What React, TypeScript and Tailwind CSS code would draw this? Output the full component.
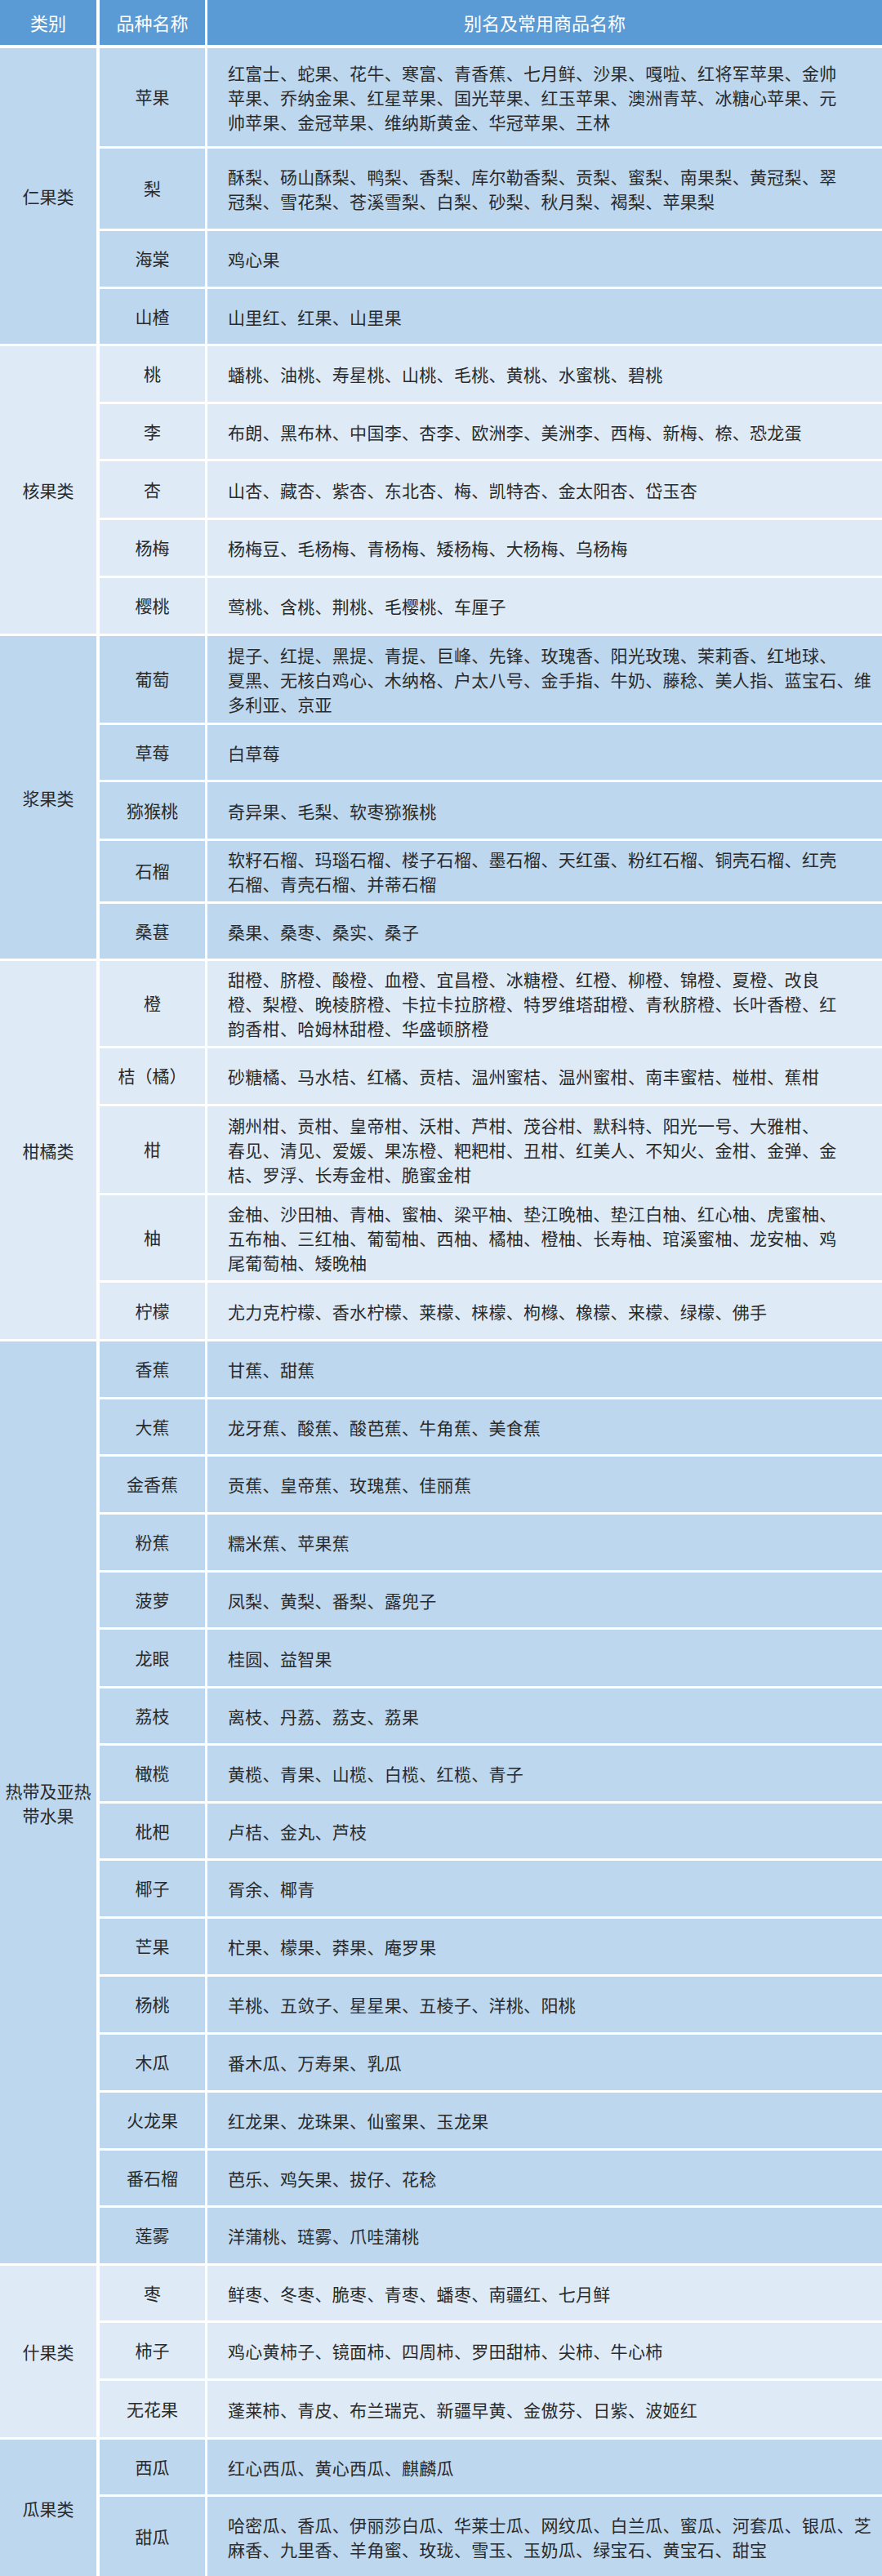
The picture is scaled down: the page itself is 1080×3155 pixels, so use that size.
import React from "react"

type Row = {
  name: string
  h: string
  lines: string[]
}

type Group = {
  name: string[]
  dark: boolean
  rows: Row[]
}

const groups: Group[] = [
  {
    name: ["仁果类"],
    dark: true,
    rows: [
      {
        name: "苹果",
        h: "h-[120px]",
        lines: [
          "红富士、蛇果、花牛、寒富、青香蕉、七月鲜、沙果、嘎啦、红将军苹果、金帅",
          "苹果、乔纳金果、红星苹果、国光苹果、红玉苹果、澳洲青苹、冰糖心苹果、元",
          "帅苹果、金冠苹果、维纳斯黄金、华冠苹果、王林",
        ],
      },
      {
        name: "梨",
        h: "h-[98px]",
        lines: [
          "酥梨、砀山酥梨、鸭梨、香梨、库尔勒香梨、贡梨、蜜梨、南果梨、黄冠梨、翠",
          "冠梨、雪花梨、苍溪雪梨、白梨、砂梨、秋月梨、褐梨、苹果梨",
        ],
      },
      { name: "海棠", h: "h-[68px]", lines: ["鸡心果"] },
      { name: "山楂", h: "h-[67px]", lines: ["山里红、红果、山里果"] },
    ],
  },
  {
    name: ["核果类"],
    dark: false,
    rows: [
      { name: "桃", h: "h-[68px]", lines: ["蟠桃、油桃、寿星桃、山桃、毛桃、黄桃、水蜜桃、碧桃"] },
      { name: "李", h: "h-[67px]", lines: ["布朗、黑布林、中国李、杏李、欧洲李、美洲李、西梅、新梅、㮈、恐龙蛋"] },
      { name: "杏", h: "h-[69px]", lines: ["山杏、藏杏、紫杏、东北杏、梅、凯特杏、金太阳杏、岱玉杏"] },
      { name: "杨梅", h: "h-[68px]", lines: ["杨梅豆、毛杨梅、青杨梅、矮杨梅、大杨梅、乌杨梅"] },
      { name: "樱桃", h: "h-[68px]", lines: ["莺桃、含桃、荆桃、毛樱桃、车厘子"] },
    ],
  },
  {
    name: ["浆果类"],
    dark: true,
    rows: [
      {
        name: "葡萄",
        h: "h-[106px]",
        lines: [
          "提子、红提、黑提、青提、巨峰、先锋、玫瑰香、阳光玫瑰、茉莉香、红地球、",
          "夏黑、无核白鸡心、木纳格、户太八号、金手指、牛奶、藤稔、美人指、蓝宝石、维",
          "多利亚、京亚",
        ],
      },
      { name: "草莓", h: "h-[67px]", lines: ["白草莓"] },
      { name: "猕猴桃", h: "h-[69px]", lines: ["奇异果、毛梨、软枣猕猴桃"] },
      {
        name: "石榴",
        h: "h-[74px]",
        lines: [
          "软籽石榴、玛瑙石榴、楼子石榴、墨石榴、天红蛋、粉红石榴、铜壳石榴、红壳",
          "石榴、青壳石榴、并蒂石榴",
        ],
      },
      { name: "桑葚", h: "h-[67px]", lines: ["桑果、桑枣、桑实、桑子"] },
    ],
  },
  {
    name: ["柑橘类"],
    dark: false,
    rows: [
      {
        name: "橙",
        h: "h-[104px]",
        lines: [
          "甜橙、脐橙、酸橙、血橙、宜昌橙、冰糖橙、红橙、柳橙、锦橙、夏橙、改良",
          "橙、梨橙、晚棱脐橙、卡拉卡拉脐橙、特罗维塔甜橙、青秋脐橙、长叶香橙、红",
          "韵香柑、哈姆林甜橙、华盛顿脐橙",
        ],
      },
      { name: "桔（橘）", h: "h-[68px]", lines: ["砂糖橘、马水桔、红橘、贡桔、温州蜜桔、温州蜜柑、南丰蜜桔、椪柑、蕉柑"] },
      {
        name: "柑",
        h: "h-[106px]",
        lines: [
          "潮州柑、贡柑、皇帝柑、沃柑、芦柑、茂谷柑、默科特、阳光一号、大雅柑、",
          "春见、清见、爱媛、果冻橙、粑粑柑、丑柑、红美人、不知火、金柑、金弹、金",
          "桔、罗浮、长寿金柑、脆蜜金柑",
        ],
      },
      {
        name: "柚",
        h: "h-[104px]",
        lines: [
          "金柚、沙田柚、青柚、蜜柚、梁平柚、垫江晚柚、垫江白柚、红心柚、虎蜜柚、",
          "五布柚、三红柚、葡萄柚、西柚、橘柚、橙柚、长寿柚、琯溪蜜柚、龙安柚、鸡",
          "尾葡萄柚、矮晚柚",
        ],
      },
      { name: "柠檬", h: "h-[69px]", lines: ["尤力克柠檬、香水柠檬、莱檬、梾檬、枸橼、橡檬、来檬、绿檬、佛手"] },
    ],
  },
  {
    name: ["热带及亚热", "带水果"],
    dark: true,
    rows: [
      { name: "香蕉", h: "h-[68px]", lines: ["甘蕉、甜蕉"] },
      { name: "大蕉", h: "h-[67px]", lines: ["龙牙蕉、酸蕉、酸芭蕉、牛角蕉、美食蕉"] },
      { name: "金香蕉", h: "h-[68px]", lines: ["贡蕉、皇帝蕉、玫瑰蕉、佳丽蕉"] },
      { name: "粉蕉", h: "h-[68px]", lines: ["糯米蕉、苹果蕉"] },
      { name: "菠萝", h: "h-[67px]", lines: ["凤梨、黄梨、番梨、露兜子"] },
      { name: "龙眼", h: "h-[69px]", lines: ["桂圆、益智果"] },
      { name: "荔枝", h: "h-[67px]", lines: ["离枝、丹荔、荔支、荔果"] },
      { name: "橄榄", h: "h-[68px]", lines: ["黄榄、青果、山榄、白榄、红榄、青子"] },
      { name: "枇杷", h: "h-[67px]", lines: ["卢桔、金丸、芦枝"] },
      { name: "椰子", h: "h-[68px]", lines: ["胥余、椰青"] },
      { name: "芒果", h: "h-[68px]", lines: ["杧果、檬果、莽果、庵罗果"] },
      { name: "杨桃", h: "h-[68px]", lines: ["羊桃、五敛子、星星果、五棱子、洋桃、阳桃"] },
      { name: "木瓜", h: "h-[68px]", lines: ["番木瓜、万寿果、乳瓜"] },
      { name: "火龙果", h: "h-[68px]", lines: ["红龙果、龙珠果、仙蜜果、玉龙果"] },
      { name: "番石榴", h: "h-[67px]", lines: ["芭乐、鸡矢果、拔仔、花稔"] },
      { name: "莲雾", h: "h-[68px]", lines: ["洋蒲桃、琏雾、爪哇蒲桃"] },
    ],
  },
  {
    name: ["什果类"],
    dark: false,
    rows: [
      { name: "枣", h: "h-[67px]", lines: ["鲜枣、冬枣、脆枣、青枣、蟠枣、南疆红、七月鲜"] },
      { name: "柿子", h: "h-[68px]", lines: ["鸡心黄柿子、镜面柿、四周柿、罗田甜柿、尖柿、牛心柿"] },
      { name: "无花果", h: "h-[69px]", lines: ["蓬莱柿、青皮、布兰瑞克、新疆早黄、金傲芬、日紫、波姬红"] },
    ],
  },
  {
    name: ["瓜果类"],
    dark: true,
    rows: [
      { name: "西瓜", h: "h-[67px]", lines: ["红心西瓜、黄心西瓜、麒麟瓜"] },
      {
        name: "甜瓜",
        h: "h-[97px]",
        lines: [
          "哈密瓜、香瓜、伊丽莎白瓜、华莱士瓜、网纹瓜、白兰瓜、蜜瓜、河套瓜、银瓜、芝",
          "麻香、九里香、羊角蜜、玫珑、雪玉、玉奶瓜、绿宝石、黄宝石、甜宝",
        ],
      },
    ],
  },
]

export default function App() {
  return (
    <div className="w-[1080px] h-[3155px] overflow-hidden bg-white font-['Noto_Sans_CJK_SC','Noto_Sans',sans-serif] text-[#2a2a2a]">
      {/* header */}
      <div className="flex h-[55px] mb-[4px] text-white text-[22px]">
        <div className="w-[118px] bg-[#5b9bd5] flex items-center justify-center">
          类别
        </div>
        <div className="w-[129px] ml-[4px] bg-[#5b9bd5] flex items-center justify-center">
          品种名称
        </div>
        <div className="flex-1 ml-[3px] bg-[#5b9bd5] flex items-center justify-center">
          别名及常用商品名称
        </div>
      </div>

      {/* body */}
      <div className="flex flex-col gap-[3px]">
        {groups.map((g) => {
          const bg = g.dark ? "bg-[#bdd7ee]" : "bg-[#deebf7]"
          return (
            <div key={g.name.join("")} className="flex">
              <div
                className={`w-[118px] ${bg} flex flex-col items-center justify-center text-[21px] leading-[30px]`}
              >
                {g.name.map((n) => (
                  <div key={n}>{n}</div>
                ))}
              </div>
              <div className="flex-1 ml-[4px] flex flex-col gap-[3px]">
                {g.rows.map((r) => (
                  <div key={r.name} className={`flex ${r.h}`}>
                    <div
                      className={`w-[129px] ${bg} flex items-center justify-center text-[21px]`}
                    >
                      {r.name}
                    </div>
                    <div
                      className={`flex-1 ml-[3px] ${bg} flex flex-col justify-center pl-[25px] text-[21px] leading-[30px] tracking-[0.3px]`}
                    >
                      {r.lines.map((l, i) => (
                        <div key={i} className="whitespace-nowrap">
                          {l}
                        </div>
                      ))}
                    </div>
                  </div>
                ))}
              </div>
            </div>
          )
        })}
      </div>
    </div>
  )
}
